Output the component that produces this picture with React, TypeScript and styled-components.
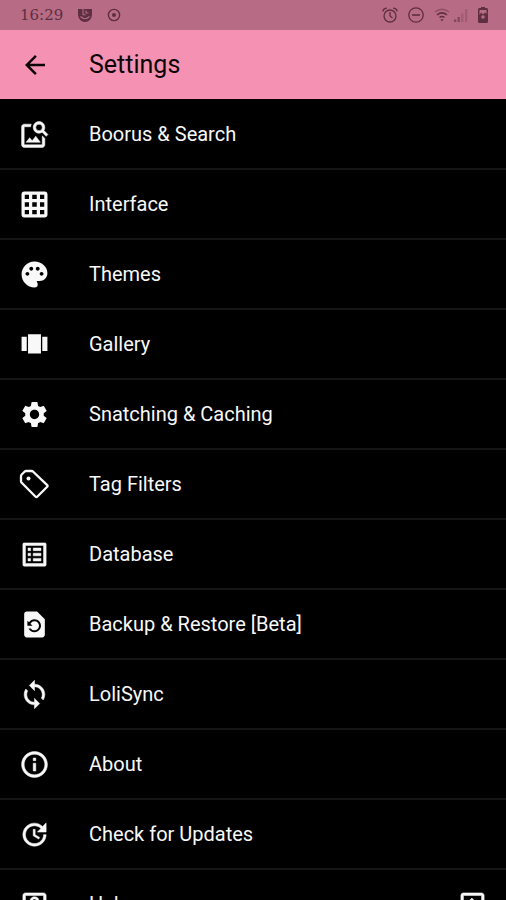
import React from "react";
import styled, { createGlobalStyle } from "styled-components";
import type { IconType } from "react-icons";
import {
  MdArrowBack,
  MdExitToApp,
  MdImageSearch,
  MdInfoOutline,
  MdListAlt,
  MdOutlineHelpCenter,
  MdPalette,
  MdRestorePage,
  MdSettings,
  MdSync,
  MdUpdate,
} from "react-icons/md";

const GlobalStyle = createGlobalStyle`
  * { box-sizing: border-box; }
  body { margin: 0; background: #000; font-family: Roboto, sans-serif; }
`;

const Screen = styled.div`
  display: flex;
  flex-direction: column;
  height: 100vh;
  overflow: hidden;
  background: #000;
`;

const StatusBar = styled.div`
  flex: none;
  display: flex;
  align-items: center;
  justify-content: space-between;
  height: 30px;
  padding: 0 18px 0 20px;
  background: #b76b84;
  color: #5d2f40;
`;

const StatusGroup = styled.div<{ $gap: number }>`
  display: flex;
  align-items: center;
  gap: ${({ $gap }) => $gap}px;

  svg {
    display: block;
  }
`;

const Clock = styled.time`
  font: 15px/20px "DejaVu Serif", serif;
`;

const AppBar = styled.header`
  flex: none;
  display: flex;
  align-items: center;
  height: 69px;
  background: #f591b2;
  color: #0c0408;
`;

const BackButton = styled.button`
  display: flex;
  justify-content: center;
  width: 69px;
  padding: 0;
  border: 0;
  background: none;
  color: inherit;
  cursor: pointer;
`;

const Title = styled.h1`
  margin: 0 0 0 20px;
  font-size: 25px;
  line-height: 32px;
  font-weight: 400;
`;

const List = styled.ul`
  flex: 1;
  min-height: 0;
  margin: 0;
  padding: 1px 0 0;
  list-style: none;
  overflow-y: auto;
  scrollbar-width: none;
`;

const Item = styled.li`
  border-bottom: 2px solid #151515;
`;

const RowButton = styled.button`
  display: flex;
  align-items: center;
  width: 100%;
  height: 68px;
  padding: 0 18px 0 19px;
  border: 0;
  background: none;
  color: #f8f8f8;
  font-family: inherit;
  font-size: 20px;
  line-height: 28px;
  font-weight: 400;
  text-align: left;
  cursor: pointer;
`;

const IconSlot = styled.span<{ $bold?: boolean }>`
  flex: none;
  display: flex;

  svg {
    display: block;
  }

  path:not([fill="none"]) {
    ${({ $bold }) => ($bold ? "stroke-width: 0.4;" : "")}
  }
`;

const RowLabel = styled.span`
  flex: 1;
  margin-left: 39px;
`;

type IconProps = { size: number };

const GridIcon = ({ size }: IconProps) => (
  <svg width={size} height={size} viewBox="0 0 24 24" fill="none" stroke="currentColor" strokeWidth="2.500">
    <rect x="3.200" y="3.200" width="17.600" height="17.600" rx="1" />
    <path d="M9 3V21M15 3V21M3 9H21M3 15H21" />
  </svg>
);

const CarouselIcon = ({ size }: IconProps) => (
  <svg width={size} height={size} viewBox="0 0 24 24" fill="currentColor">
    <path d="M7 19h10V4H7v15zm-5-2h4V6H2v11zM18 6v11h4V6h-4z" />
  </svg>
);

const TagIcon = ({ size }: IconProps) => (
  <svg width={size} height={size} viewBox="0 0 31 31" fill="none" stroke="currentColor" strokeWidth="2.300" strokeLinejoin="round">
    <path d="M2 9V7.200Q2 6.200 2.700 5.500L5.500 2.700Q6.200 2 7.200 2H12.500Q13.500 2 14.200 2.700L28.200 16.200Q29 17 28.200 17.800L18.200 27.700Q17.400 28.500 16.600 27.700L2.700 13.800Q2 13.200 2 12.300Z" />
    <circle cx="9.500" cy="9.500" r="2" fill="currentColor" stroke="none" />
  </svg>
);

const MaskIcon = () => (
  <svg width="14" height="14" viewBox="0 0 14 14" fill="currentColor">
    <path d="M0 1H14V7Q13 13.500 7 14 1 13.500 0 7Z" />
    <path d="M2.500 8.500Q7 13 11.500 8.500M5 1V6.500L7.500 7M8 2.500V5H10.500" fill="none" stroke="#b76b84" strokeWidth="1.100" />
  </svg>
);

const TargetIcon = () => (
  <svg width="14" height="14" viewBox="0 0 14 14" fill="none" stroke="currentColor" strokeWidth="1.400">
    <circle cx="7" cy="7" r="5.600" />
    <circle cx="7" cy="7" r="2" fill="currentColor" stroke="none" />
  </svg>
);

const AlarmIcon = () => (
  <svg width="16" height="16" viewBox="0 0 16 16" fill="none" stroke="currentColor" strokeWidth="1.300">
    <circle cx="8" cy="9" r="6" />
    <path d="M8 5V9L10.500 11M.8 4.300Q1.500 1.300 4.800 1.200M15.200 4.300Q14.500 1.300 11.200 1.200" />
  </svg>
);

const DoNotDisturbIcon = () => (
  <svg width="16" height="16" viewBox="0 0 16 16" fill="none" stroke="currentColor" strokeWidth="1.300">
    <circle cx="8" cy="8" r="7.200" />
    <path d="M4 8H12" strokeWidth="1.600" />
  </svg>
);

const WifiIcon = () => (
  <svg width="16" height="14" viewBox="0 0 16 14" fill="none" stroke="currentColor" strokeWidth="1.500">
    <path d="M1 4Q8-1.500 15 4" opacity="0.45" />
    <path d="M3 7Q8 2.800 13 7M5.500 9.500Q8 7.500 10.500 9.500" />
    <path d="M6.500 11.300H9.500L8 13.500Z" fill="currentColor" stroke="none" />
  </svg>
);

const SignalIcon = () => (
  <svg width="14" height="14" viewBox="0 0 14 14" fill="currentColor">
    <path d="M0 11.500H2.200V14H0ZM3.600 9H5.800V14H3.600Z" opacity="0.6" />
    <path d="M7.200 5.500H9.400V14H7.200ZM11 1H13.200V14H11Z" opacity="0.25" />
  </svg>
);

const BatteryIcon = () => (
  <svg width="10" height="16" viewBox="0 0 10 16">
    <path d="M3 0H7V1H8.500Q10 1 10 2.500V14.500Q10 16 8.500 16H1.500Q0 16 0 14.500V2.500Q0 1 1.500 1H3Z" fill="currentColor" />
    <path d="M1.500 3H8.500V7L7 5.500 5 7.500 3 5.500 1.500 8Z" fill="#b76b84" />
    <circle cx="5" cy="10" r="1.800" fill="#b76b84" />
  </svg>
);

type Entry = {
  label: string;
  Icon: IconType | typeof TagIcon;
  bold?: boolean;
  external?: boolean;
};

const entries: Entry[] = [
  { label: "Boorus & Search", Icon: MdImageSearch, bold: true },
  { label: "Interface", Icon: GridIcon },
  { label: "Themes", Icon: MdPalette },
  { label: "Gallery", Icon: CarouselIcon },
  { label: "Snatching & Caching", Icon: MdSettings },
  { label: "Tag Filters", Icon: TagIcon },
  { label: "Database", Icon: MdListAlt, bold: true },
  { label: "Backup & Restore [Beta]", Icon: MdRestorePage },
  { label: "LoliSync", Icon: MdSync, bold: true },
  { label: "About", Icon: MdInfoOutline, bold: true },
  { label: "Check for Updates", Icon: MdUpdate, bold: true },
  { label: "Help", Icon: MdOutlineHelpCenter, bold: true, external: true },
];

export default function App() {
  return (
    <Screen>
      <GlobalStyle />
      <StatusBar>
        <StatusGroup $gap={15}>
          <Clock>16:29</Clock>
          <MaskIcon />
          <TargetIcon />
        </StatusGroup>
        <StatusGroup $gap={10}>
          <AlarmIcon />
          <DoNotDisturbIcon />
          <StatusGroup $gap={4}>
            <WifiIcon />
            <SignalIcon />
          </StatusGroup>
          <BatteryIcon />
        </StatusGroup>
      </StatusBar>
      <AppBar>
        <BackButton aria-label="Back">
          <MdArrowBack size={30} />
        </BackButton>
        <Title>Settings</Title>
      </AppBar>
      <List>
        {entries.map(({ label, Icon, bold, external }) => (
          <Item key={label}>
            <RowButton>
              <IconSlot $bold={bold}>
                <Icon size={31} />
              </IconSlot>
              <RowLabel>{label}</RowLabel>
              {external && (
                <IconSlot $bold>
                  <MdExitToApp size={31} />
                </IconSlot>
              )}
            </RowButton>
          </Item>
        ))}
      </List>
    </Screen>
  );
}
